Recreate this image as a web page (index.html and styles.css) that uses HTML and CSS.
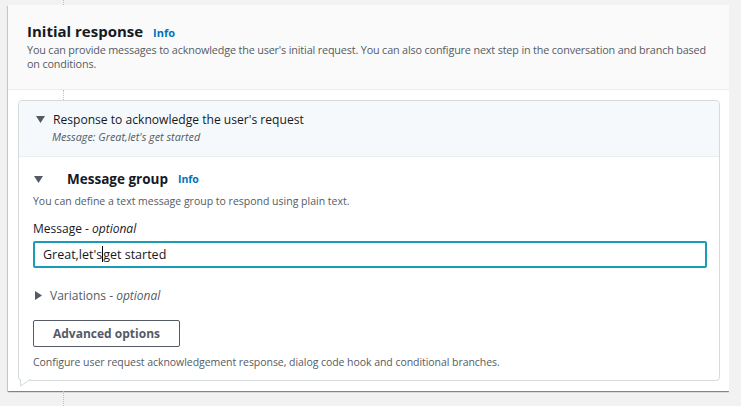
FILE: index.html
```html
<!DOCTYPE html>
<html lang="en">
<head>
<meta charset="utf-8">
<title>Initial response</title>
<link rel="stylesheet" href="styles.css">
</head>
<body>
<div class="page">
  <div class="connector connector-top"></div>
  <section class="card">
    <header class="card-header">
      <h2 class="title">Initial response <a class="info" href="#">Info</a></h2>
      <p class="desc">You can provide messages to acknowledge the user's initial request. You can also configure next step in the conversation and branch based on conditions.</p>
    </header>
    <div class="card-body">
      <div class="connector connector-mid"></div>
      <div class="inner">
        <div class="inner-header">
          <div class="row">
            <svg class="caret-down" width="9" height="7" viewBox="0 0 9 7"><polygon points="0,0 9,0 4.5,7" fill="#545b64"/></svg>
            <span class="inner-title">Response to acknowledge the user's request</span>
          </div>
          <p class="inner-sub">Message: Great,let's get started</p>
        </div>
        <div class="inner-body">
          <div class="group-row">
            <svg class="caret-down" width="9" height="7" viewBox="0 0 9 7"><polygon points="0,0 9,0 4.5,7" fill="#545b64"/></svg>
            <span class="group-title">Message group</span>
            <a class="info info-group" href="#">Info</a>
          </div>
          <p class="help">You can define a text message group to respond using plain text.</p>
          <label class="label">Message - <i>optional</i></label>
          <div class="input">Great,let's<span class="text-caret"></span>get started</div>
          <div class="var-row">
            <svg class="caret-right" width="7" height="9" viewBox="0 0 7 9"><polygon points="0,0 7,4.5 0,9" fill="#545b64"/></svg>
            <span class="var-text">Variations - <i>optional</i></span>
          </div>
          <button class="btn" type="button">Advanced options</button>
          <p class="help help-bottom">Configure user request acknowledgement response, dialog code hook and conditional branches.</p>
        </div>
        <svg class="tail" width="12" height="8" viewBox="0 0 12 8"><polygon points="0.5,0 0.5,7 11,0" fill="#ffffff"/><polyline points="0.5,0 0.5,7 11,0" fill="none" stroke="#d5dbdb" stroke-width="1"/></svg>
      </div>
    </div>
  </section>
  <div class="connector connector-bottom"></div>
</div>
</body>
</html>
```

FILE: styles.css
```css
html, body {
  margin: 0;
  padding: 0;
  background: #f2f2f2;
  font-family: "Open Sans", "Noto Sans", sans-serif;
  color: #16191f;
}
.page {
  width: 721px;
  padding-left: 8px;
  height: 406px;
  overflow: hidden;
}
.connector {
  margin-left: 55px;
  border-left: 1px dotted #a9c8d6;
}
.connector-top { height: 5px; }
.connector-mid { height: 10px; }
.connector-bottom { height: 15px; }
.card {
  background: #ffffff;
  box-shadow: 0 1px 1px 0 rgba(0, 28, 36, 0.3), 1px 1px 1px 0 rgba(0, 28, 36, 0.15), -1px 1px 1px 0 rgba(0, 28, 36, 0.15);
}
.card-header {
  background: #fafafa;
  border-bottom: 1px solid #eaeded;
  padding: 16px 19px 0 19px;
  height: 68px;
}
.title {
  margin: 0;
  font-size: 15px;
  font-weight: 700;
  line-height: 20px;
  color: #16191f;
}
.info {
  font-size: 11px;
  font-weight: 700;
  color: #0073bb;
  text-decoration: none;
  margin-left: 6px;
}
.desc {
  margin: 0;
  font-size: 10.8px;
  letter-spacing: -0.15px;
  line-height: 14px;
  color: #545b64;
}
.card-body {
  padding: 0 9px 10px 10px;
}
.card-body .connector { margin-left: 45px; }
.inner {
  position: relative;
  border: 1px solid #d5dbdb;
  border-radius: 4px;
  background: #ffffff;
}
.inner-header {
  background: #f5f9fc;
  border-bottom: 1px solid #eaeded;
  border-radius: 4px 4px 0 0;
  padding: 9px 17px 0 17px;
  height: 46px;
}
.row {
  display: flex;
  align-items: center;
  gap: 8px;
  height: 18px;
}
.inner-title {
  font-size: 12.1px;
  color: #16191f;
}
.inner-sub {
  margin: 0 0 0 16px;
  font-size: 10.8px;
  font-style: italic;
  color: #545b64;
  line-height: 18px;
}
.inner-body {
  padding: 12px 12px 11px 14px;
}
.group-row {
  display: flex;
  align-items: center;
  height: 20px;
  padding-left: 1px;
}
.group-title {
  margin-left: 24px;
  font-size: 13.5px;
  font-weight: 700;
  color: #16191f;
}
.info-group {
  margin-left: 10px;
  font-size: 10.5px;
}
.help {
  margin: 5px 0 0 0;
  font-size: 10.5px;
  line-height: 14px;
  color: #545b64;
}
.label {
  display: block;
  margin-top: 13px;
  font-size: 12px;
  line-height: 16px;
  color: #16191f;
}
.input {
  margin-top: 4px;
  height: 23px;
  border: 2px solid #1a9cb6;
  border-radius: 2px;
  padding: 0 8px;
  font-size: 12.5px;
  line-height: 23px;
  color: #16191f;
}
.text-caret {
  display: inline-block;
  width: 0;
  height: 16px;
  border-left: 1px solid #000;
  vertical-align: -3px;
}
.var-row {
  display: flex;
  align-items: center;
  gap: 8px;
  margin-top: 19px;
  padding-left: 2px;
  height: 16px;
}
.var-text {
  font-size: 12px;
  color: #545b64;
}
.btn {
  display: block;
  margin-top: 17px;
  width: 147px;
  height: 27px;
  border: 1px solid #545b64;
  border-radius: 2px;
  background: #ffffff;
  font-family: "Open Sans", "Noto Sans", sans-serif;
  font-size: 12px;
  font-weight: 700;
  color: #545b64;
  padding: 0;
}
.help-bottom {
  margin-top: 8px;
  letter-spacing: -0.05px;
}
.tail {
  position: absolute;
  left: 1px;
  bottom: -7px;
}
```
